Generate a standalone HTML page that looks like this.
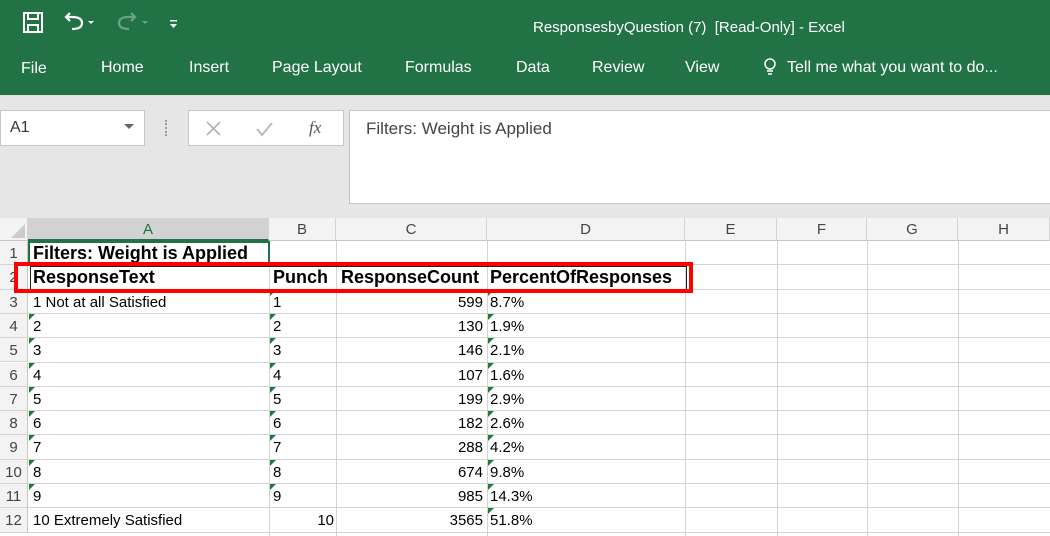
<!DOCTYPE html>
<html><head><meta charset="utf-8"><style>
*{margin:0;padding:0;box-sizing:border-box}
body{width:1050px;height:536px;overflow:hidden;background:#fff;font-family:"Liberation Sans",sans-serif;position:relative}
.g{position:absolute;left:0;top:0;width:1050px;height:95px;background:#217346;color:#fff}
.t{position:absolute;font-size:16px;color:#fff}
.fa{position:absolute;left:0;top:95px;width:1050px;height:123px;background:#e6e6e6}
.box{position:absolute;background:#fff;border:1px solid #c6c6c6}
.ch{position:absolute;top:218px;height:23px;background:#f3f3f3;border-right:1px solid #d4d4d4;border-bottom:1px solid #c6c6c6;font-size:15px;color:#444;text-align:center;line-height:23px}
.rh{position:absolute;left:0;width:28px;background:#f3f3f3;border-bottom:1px solid #d4d4d4;border-right:1px solid #c6c6c6;font-size:15px;color:#444;text-align:center}
.vl{position:absolute;top:241px;height:295px;width:1px;background:#d4d4d4}
.hl{position:absolute;left:28px;width:1022px;height:1px;background:#d4d4d4}
.c{position:absolute;font-size:15px;color:#000;white-space:nowrap}
.b{font-weight:bold;font-size:18px}
.tri{position:absolute;width:0;height:0;border-top:6px solid #1e7b34;border-right:6px solid transparent}
</style></head><body>
<div class="g"></div>
<svg style="position:absolute;left:22px;top:11px" width="160" height="24" viewBox="0 0 160 24">
<rect x="2" y="2" width="18" height="19" fill="none" stroke="#fff" stroke-width="2"/><rect x="6" y="2" width="10" height="6" fill="none" stroke="#fff" stroke-width="2"/><rect x="6" y="14" width="10" height="7" fill="none" stroke="#fff" stroke-width="2"/>
<path d="M50 18 Q60 18 60 12 Q60 6 50 6 L45 6 M48 2 L44 6 L48 10" fill="none" stroke="#fff" stroke-width="2.2"/>
<path d="M66 10 l6 0 l-3 3z" fill="#fff"/>
<path d="M107 18 Q97 18 97 12 Q97 6 107 6 L112 6 M109 2 L113 6 L109 10" fill="none" stroke="#6aa383" stroke-width="2.2"/>
<path d="M120 10 l6 0 l-3 3z" fill="#6aa383"/>
<rect x="148" y="9" width="7" height="1.5" fill="#fff"/><path d="M148 13 l7 0 l-3.5 4z" fill="#fff"/>
</svg>
<div class="t" style="left:533px;top:19px;font-size:15px">ResponsesbyQuestion (7)&nbsp; [Read-Only] - Excel</div>
<div class="t" style="left:21px;top:60px">File</div>
<div class="t" style="left:101px;top:59px">Home</div>
<div class="t" style="left:189px;top:59px">Insert</div>
<div class="t" style="left:272px;top:59px">Page Layout</div>
<div class="t" style="left:405px;top:59px">Formulas</div>
<div class="t" style="left:516px;top:59px">Data</div>
<div class="t" style="left:592px;top:59px">Review</div>
<div class="t" style="left:685px;top:59px">View</div>
<svg style="position:absolute;left:762px;top:57px" width="16" height="20"><circle cx="8" cy="7" r="5" fill="none" stroke="#fff" stroke-width="1.5"/><path d="M5 14h6M6 17h4" stroke="#fff" stroke-width="1.5"/></svg>
<div class="t" style="left:787px;top:59px">Tell me what you want to do...</div>
<div class="fa"></div>
<div class="box" style="left:0;top:110px;width:145px;height:36px"></div>
<div class="c" style="left:10px;top:119px;font-size:16px;color:#333">A1</div>
<svg style="position:absolute;left:124px;top:124px" width="10" height="6"><path d="M0 0h10L5 5z" fill="#666"/></svg>
<div style="position:absolute;left:165px;top:120px;width:2px;height:16px;border-left:2px dotted #999"></div>
<div class="box" style="left:188px;top:110px;width:156px;height:36px"></div>
<svg style="position:absolute;left:205px;top:120px" width="120" height="18"><path d="M2 2l13 13M15 2L2 15" stroke="#aaa" stroke-width="1.5"/><path d="M52 9l5 6 10-12" fill="none" stroke="#bbb" stroke-width="2"/></svg>
<div class="c" style="left:309px;top:118px;font-family:'Liberation Serif',serif;font-style:italic;color:#555;font-size:17px">fx</div>
<div class="box" style="left:349px;top:110px;width:702px;height:94px"></div>
<div class="c" style="left:366px;top:119px;font-size:17px;color:#444">Filters: Weight is Applied</div>
<div class="ch" style="left:0;width:28px;background:#f3f3f3"><svg width="14" height="14" style="position:absolute;left:11px;top:6px"><path d="M14 0V14H0z" fill="#ccc"/></svg></div>
<div class="ch" style="left:28px;width:241px;background:#d2d2d2;color:#217346;border-bottom:2px solid #217346">A</div>
<div class="ch" style="left:269px;width:67px">B</div>
<div class="ch" style="left:336px;width:151px">C</div>
<div class="ch" style="left:487px;width:198px">D</div>
<div class="ch" style="left:685px;width:92px">E</div>
<div class="ch" style="left:777px;width:90px">F</div>
<div class="ch" style="left:867px;width:91px">G</div>
<div class="ch" style="left:958px;width:92px">H</div>
<div class="vl" style="left:269px"></div><div class="vl" style="left:336px"></div><div class="vl" style="left:487px"></div><div class="vl" style="left:685px"></div><div class="vl" style="left:777px"></div><div class="vl" style="left:867px"></div><div class="vl" style="left:958px"></div>
<div id="rows"></div>
<script>
var data=[["Filters: Weight is Applied","","",""],["ResponseText","Punch","ResponseCount","PercentOfResponses"],["1 Not at all Satisfied","1","599","8.7%"],["2","2","130","1.9%"],["3","3","146","2.1%"],["4","4","107","1.6%"],["5","5","199","2.9%"],["6","6","182","2.6%"],["7","7","288","4.2%"],["8","8","674","9.8%"],["9","9","985","14.3%"],["10 Extremely Satisfied","10","3565","51.8%"]];
var h="",rh=24.3;
for(var i=0;i<12;i++){var y=241+i*rh;
h+='<div class="rh" style="top:'+y+'px;height:'+rh+'px;line-height:'+(rh+2)+'px">'+(i+1)+'</div>';
h+='<div class="hl" style="top:'+(y+rh-1)+'px"></div>';
var d=data[i],b=i<2?' b':'';var ty=y+(i<2?2:4);
h+='<div class="c'+b+'" style="left:33px;top:'+ty+'px">'+d[0]+'</div>';
if(i==11)h+='<div class="c" style="right:716px;top:'+ty+'px">'+d[1]+'</div>';
else if(d[1])h+='<div class="c'+b+'" style="left:273px;top:'+ty+'px">'+d[1]+'</div>';
if(d[2])h+='<div class="c'+b+'" style="'+(i<2?'left:341px':'right:567px')+';top:'+ty+'px">'+d[2]+'</div>';
if(d[3])h+='<div class="c'+b+'" style="left:490px;top:'+ty+'px">'+d[3]+'</div>';
if(i>=2){if(i>=3&&i<11)h+='<div class="tri" style="left:29px;top:'+y+'px"></div>';
if(i<11)h+='<div class="tri" style="left:270px;top:'+y+'px"></div>';
h+='<div class="tri" style="left:488px;top:'+y+'px"></div>';}
}
document.getElementById('rows').innerHTML=h;
</script>
<div style="position:absolute;left:28px;top:241px;width:242px;height:25px;border:2px solid #217346"></div>
<div style="position:absolute;left:266px;top:262px;width:6px;height:6px;background:#217346;border:1px solid #fff"></div>
<div style="position:absolute;left:30px;top:266px;width:657px;height:24px;border:1px solid #222"></div>
<div style="position:absolute;left:14px;top:262px;width:679px;height:31px;border:4px solid #f00"></div>
</body></html>
